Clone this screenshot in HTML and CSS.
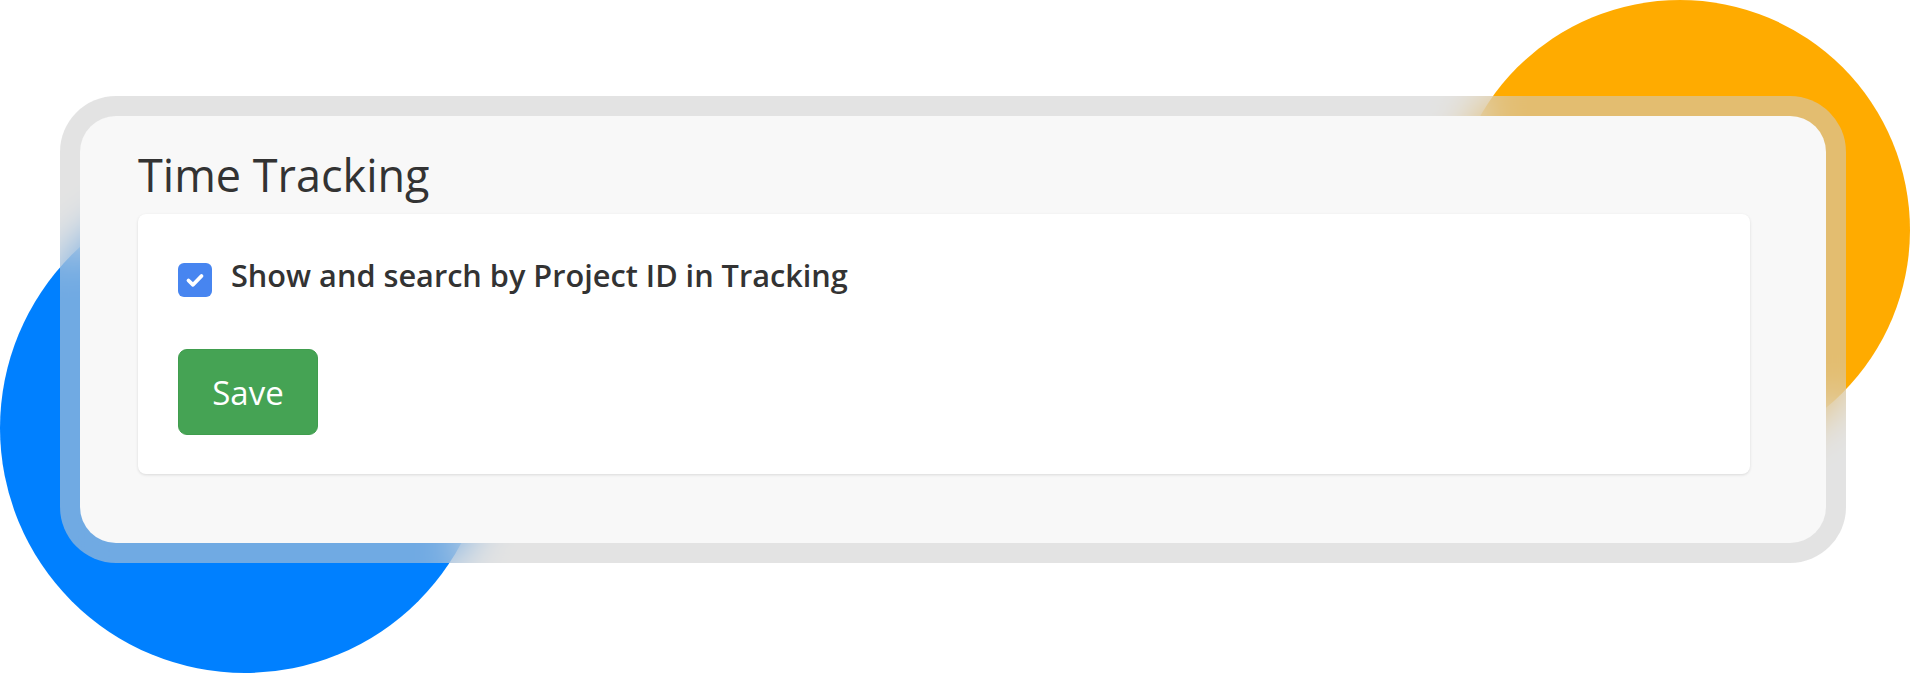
FILE: index.html
```html
<!DOCTYPE html>
<html lang="en">
<head>
<meta charset="utf-8">
<title>Time Tracking</title>
<link rel="stylesheet" href="styles.css">
</head>
<body>
<div class="stage">
  <div class="blob blob-blue"></div>
  <div class="blob blob-orange"></div>
  <div class="frame">
    <section class="panel">
      <h2 class="panel-title">Time Tracking</h2>
      <div class="card">
        <label class="check-row">
          <span class="checkbox">
            <svg viewBox="0 0 34 34" width="34" height="34" aria-hidden="true">
              <polyline points="10.5,17.5 15,21.8 23.5,13" fill="none" stroke="#ffffff" stroke-width="3.8" stroke-linecap="round" stroke-linejoin="round"/>
            </svg>
          </span>
          <span class="check-label">Show and search by Project ID in Tracking</span>
        </label>
        <button class="btn-save" type="button">Save</button>
      </div>
    </section>
  </div>
</div>
</body>
</html>
```
FILE: styles.css
```css
* { box-sizing: border-box; }

html, body {
  margin: 0;
  padding: 0;
  background: #ffffff;
}

body {
  font-family: "Open Sans", "Noto Sans", "Liberation Sans", sans-serif;
  color: #333333;
}

.stage {
  position: relative;
  width: 1910px;
  height: 674px;
  overflow: hidden;
  padding: 96px 0 0 60px;
}

.blob {
  position: absolute;
  border-radius: 50%;
}

.blob-blue {
  left: 0;
  top: 183px;
  width: 490px;
  height: 490px;
  background: #0080ff;
}

.blob-orange {
  left: 1450px;
  top: 0;
  width: 460px;
  height: 460px;
  background: #ffab00;
}

.frame {
  position: relative;
  z-index: 1;
  width: 1786px;
  padding: 20px;
  border-radius: 56px;
  background: rgba(204, 204, 204, 0.55);
  -webkit-backdrop-filter: blur(22px);
  backdrop-filter: blur(22px);
}

.panel {
  display: flex;
  flex-direction: column;
  gap: 13px;
  background: #f8f8f8;
  border-radius: 36px;
  padding: 32px 76px 69px 58px;
}

.panel-title {
  margin: 0;
  font-size: 45px;
  line-height: 53px;
  font-weight: 400;
  color: #333333;
  letter-spacing: 0;
}

.card {
  display: flex;
  flex-direction: column;
  align-items: flex-start;
  background: #ffffff;
  border-radius: 8px;
  box-shadow: 0 1px 3px rgba(0, 0, 0, 0.12);
  padding: 46px 40px 39px 40px;
  height: 260px;
}

.check-row {
  display: flex;
  align-items: flex-start;
  gap: 19px;
}

.checkbox {
  display: flex;
  width: 34px;
  height: 34px;
  margin-top: 3px;
  border-radius: 6px;
  background: #4785f0;
}

.check-label {
  font-size: 30.7px;
  line-height: 30px;
  font-weight: 600;
  color: #333333;
}

.btn-save {
  margin-top: 52px;
  width: 140px;
  height: 86px;
  border: 1px solid #409d4e;
  border-radius: 9px;
  background: #45a354;
  color: #ffffff;
  font-family: "Open Sans", "Noto Sans", "Liberation Sans", sans-serif;
  font-size: 33px;
  font-weight: 500;
  line-height: 1;
  padding: 0;
}
```
